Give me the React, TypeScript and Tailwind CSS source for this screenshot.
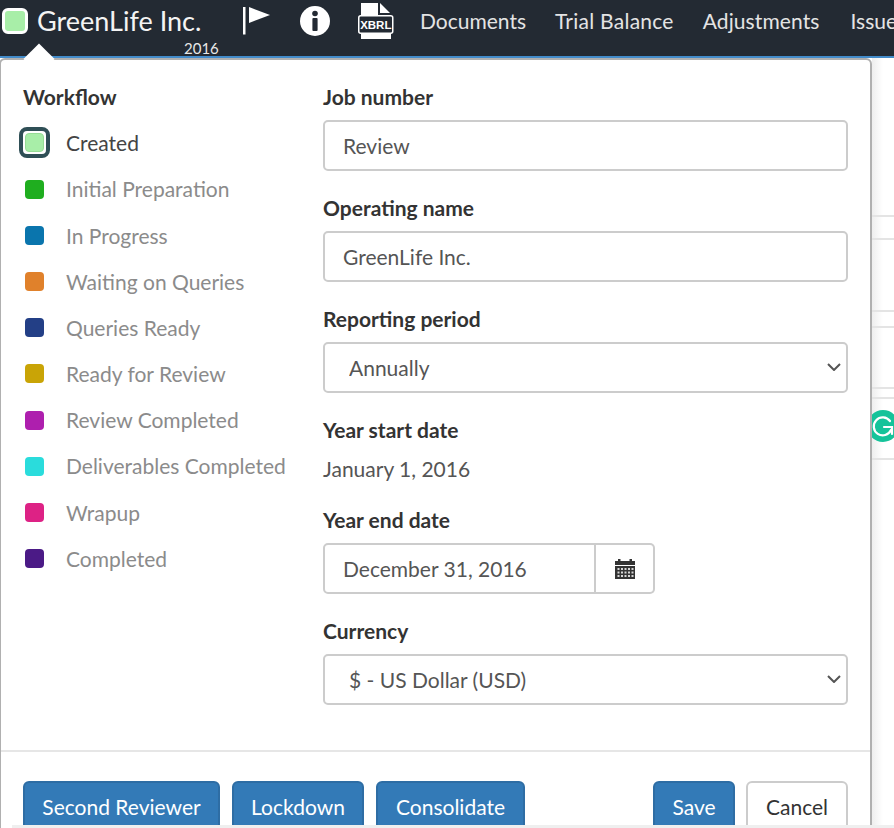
const steps: [string, string][] = [
  ["Initial Preparation", "bg-[#1fae1f]"],
  ["In Progress", "bg-[#0a75ad]"],
  ["Waiting on Queries", "bg-[#e0812b]"],
  ["Queries Ready", "bg-[#233f86]"],
  ["Ready for Review", "bg-[#c9a406]"],
  ["Review Completed", "bg-[#ae1fae]"],
  ["Deliverables Completed", "bg-[#2adcdc]"],
  ["Wrapup", "bg-[#dd2285]"],
  ["Completed", "bg-[#4b1a86]"],
];

const inputCls =
  "block w-full h-[51px] border-2 border-[#ccc] rounded-[5px] bg-white text-[21px] text-[#555] px-[18px] outline-none";
const selectCls =
  "block w-full h-[51px] appearance-none border-2 border-[#ccc] rounded-[5px] bg-white text-[21px] text-[#555] pl-[24px] pr-[40px] outline-none";

function Label({ children }: { children: string }) {
  return <div className="h-[27px] mb-[10px] leading-[27px] text-[21px] font-bold text-[#333]">{children}</div>;
}

function Flag() {
  return (
    <svg width="27" height="28" viewBox="0 0 27 28" className="shrink-0">
      <rect x="0" y="0" width="2.5" height="27.5" fill="#fff" />
      <path d="M6 0 L27 8 L6 16 Z" fill="#fff" />
    </svg>
  );
}

function Info() {
  return (
    <svg width="30" height="30" viewBox="0 0 30 30" className="shrink-0">
      <circle cx="15" cy="15" r="15" fill="#fff" />
      <circle cx="15" cy="7.5" r="2.8" fill="#232a33" />
      <rect x="12.4" y="12" width="5.2" height="13" rx="1" fill="#232a33" />
    </svg>
  );
}

function Xbrl() {
  return (
    <svg width="36" height="37" viewBox="0 0 36 37" className="shrink-0">
      <path d="M3 0 H20 V12 H3 Z" fill="#fff" />
      <path d="M22 0 L32 10 H22 Z" fill="#fff" />
      <path d="M3 30 H33 V36 H3 Z" fill="#fff" />
      <rect x="0.75" y="12.75" width="34" height="17.5" rx="2" fill="#232a33" stroke="#fff" strokeWidth="1.5" />
      <text x="17.8" y="26" textAnchor="middle" fontFamily="Liberation Sans, sans-serif" fontWeight="700" fontSize="11.5" fill="#fff">XBRL</text>
    </svg>
  );
}

function Calendar() {
  const cells: [number, number][] = [];
  for (const y of [9, 12.5, 16]) for (const x of [2.5, 6, 9.5, 13, 16.5]) cells.push([x, y]);
  return (
    <svg width="20" height="20" viewBox="0 0 20 20">
      <rect x="3" y="0" width="2.5" height="4" fill="#333" />
      <rect x="14.5" y="0" width="2.5" height="4" fill="#333" />
      <rect x="0" y="2" width="20" height="4" fill="#333" />
      <rect x="0" y="7" width="20" height="13" fill="#333" />
      {cells.map(([x, y]) => (
        <rect key={`${x}-${y}`} x={x} y={y} width="2" height="2" fill="#fff" opacity="0.8" />
      ))}
    </svg>
  );
}

function Select({ children }: { children: React.ReactNode }) {
  return (
    <div className="relative">
      <select className={selectCls}>{children}</select>
      <svg width="14" height="8" viewBox="0 0 14 8" fill="none" className="absolute right-[7px] top-[21px] pointer-events-none">
        <path d="M1 1 L7 7 L13 1" stroke="#555" strokeWidth="2" />
      </svg>
    </div>
  );
}

export default function App() {
  return (
    <div className="relative h-[828px] w-[894px] overflow-hidden bg-white font-['Lato','Open_Sans',sans-serif]">
      <header className="h-[58px] bg-[#232a33] border-b-2 border-[#428bca] flex items-start whitespace-nowrap">
        <div className="relative w-[243px] h-full shrink-0">
          <div className="absolute left-[2px] top-[8px] w-[26px] h-[26px] rounded-[6px] bg-[#a8eea8] border-[3px] border-white" />
          <div className="absolute left-[37px] top-[3px] text-[27px] leading-[36px] text-[#f4f4f4]">GreenLife Inc.</div>
          <div className="absolute left-[184px] top-[39px] text-[15px] leading-[18px] text-[#e8e8e8]">2016</div>
        </div>
        <div className="mt-[7px] shrink-0"><Flag /></div>
        <div className="w-[30px] shrink-0" />
        <div className="mt-[6px] shrink-0"><Info /></div>
        <div className="w-[28px] shrink-0" />
        <div className="mt-[3px] shrink-0"><Xbrl /></div>
        <div className="w-[26px] shrink-0" />
        <nav className="flex text-[21px] leading-[42px] text-[#e4e4e4]">
          <span>Documents</span>
          <span className="ml-[29px] tracking-[0.25px]">Trial Balance</span>
          <span className="ml-[29px] tracking-[0.1px]">Adjustments</span>
          <span className="ml-[31px]">Issues</span>
        </nav>
      </header>

      {/* page behind the popover */}
      <div className="absolute left-[872px] top-[58px] right-0 bottom-0 bg-gradient-to-r from-[#eeeeee] via-white to-white">
        <div className="mt-[157px] h-[2px] bg-[#e4e4e4]" />
        <div className="mt-[21px] h-[2px] bg-[#e4e4e4]" />
        <div className="mt-[70px] h-[2px] bg-[#e4e4e4]" />
        <div className="mt-[14px] h-[2px] bg-[#e4e4e4]" />
        <div className="mt-[59px] h-[2px] bg-[#e4e4e4]" />
        <div className="mt-[8px] h-[2px] bg-[#e4e4e4]" />
        <div className="mt-[59px] h-[2px] bg-[#e4e4e4]" />
      </div>

      {/* Grammarly badge */}
      <div className="absolute left-[867px] top-[410px] w-[32px] h-[32px] rounded-full bg-[#15c39a] flex items-center justify-center">
        <svg width="24" height="24" viewBox="0 0 24 24" fill="none" stroke="#fff" strokeWidth="2.2">
          <path d="M19 7 A9 9 0 1 0 20 16" strokeLinecap="round" />
          <path d="M13 13 H21 V20" strokeLinecap="round" />
        </svg>
      </div>

      {/* popover */}
      <div className="absolute left-[-1px] top-[58px] w-[873px] h-[790px] bg-white border-2 border-[#b0b0b0] rounded-[6px]">
        <div className="absolute left-[27px] top-[-12px] w-[22px] h-[22px] rotate-45 bg-white" />
        <div className="relative flex h-[690px]">
          <div className="w-[322px] shrink-0 pl-[22px] pt-[23px]">
            <div className="h-[27px] leading-[27px] text-[21px] font-bold text-[#333]">Workflow</div>
            <div className="mt-[19.4px] flex items-center h-[27px]">
              <div className="w-[31px] h-[31px] -ml-[4px] shrink-0 rounded-[8px] border-4 border-[#2f4f56] bg-white flex items-center justify-center">
                <div className="w-[19px] h-[19px] rounded-[4px] bg-[#a8eea8] border border-[#96dc96]" />
              </div>
              <span className="ml-[16px] text-[21px] text-[#444]">Created</span>
            </div>
            {steps.map(([name, color]) => (
              <div key={name} className="mt-[19.2px] flex items-center h-[27px]">
                <div className={`w-[19px] h-[19px] ml-[2px] shrink-0 rounded-[4px] ${color}`} />
                <span className="ml-[22px] text-[21px] text-[#8b8b8b] whitespace-nowrap">{name}</span>
              </div>
            ))}
          </div>
          <div className="w-[525px] pt-[23px]">
            <Label>Job number</Label>
            <input className={inputCls} defaultValue="Review" />
            <div className="h-[23px]" />
            <Label>Operating name</Label>
            <input className={inputCls} defaultValue="GreenLife Inc." />
            <div className="h-[23px]" />
            <Label>Reporting period</Label>
            <Select><option>Annually</option></Select>
            <div className="h-[23px]" />
            <Label>Year start date</Label>
            <div className="pt-[2px] h-[29px] leading-[27px] text-[21px] text-[#555]">January 1, 2016</div>
            <div className="h-[24px]" />
            <Label>Year end date</Label>
            <div className="flex w-[332px] h-[51px]">
              <input
                className="w-[273px] h-full border-2 border-[#ccc] rounded-l-[5px] text-[21px] text-[#555] px-[18px] outline-none"
                defaultValue="December 31, 2016"
              />
              <div className="w-[59px] h-full border-2 border-l-0 border-[#ccc] rounded-r-[5px] flex items-center justify-center">
                <Calendar />
              </div>
            </div>
            <div className="h-[23px]" />
            <Label>Currency</Label>
            <Select><option>$ - US Dollar (USD)</option></Select>
          </div>
        </div>
        <div className="h-[2px] bg-[#e6e6e6]" />
        <div className="flex items-start pt-[29px] pl-[22px] pr-[22px] text-[21px]">
          <div className="flex gap-[12px]">
            <button className="h-[51px] w-[197px] bg-[#337ab7] rounded-[6px] border-2 border-[#2e6da4] text-white">Second Reviewer</button>
            <button className="h-[51px] w-[132px] bg-[#337ab7] rounded-[6px] border-2 border-[#2e6da4] text-white">Lockdown</button>
            <button className="h-[51px] w-[149px] bg-[#337ab7] rounded-[6px] border-2 border-[#2e6da4] text-white">Consolidate</button>
          </div>
          <div className="ml-auto flex gap-[11px]">
            <button className="h-[51px] w-[82px] bg-[#337ab7] rounded-[6px] border-2 border-[#2e6da4] text-white">Save</button>
            <button className="h-[51px] w-[102px] bg-white rounded-[6px] border-2 border-[#ccc] text-[#333]">Cancel</button>
          </div>
        </div>
      </div>

      <div className="absolute left-[12px] right-0 top-[825px] h-[3px] bg-[#efefef]" />
    </div>
  );
}
